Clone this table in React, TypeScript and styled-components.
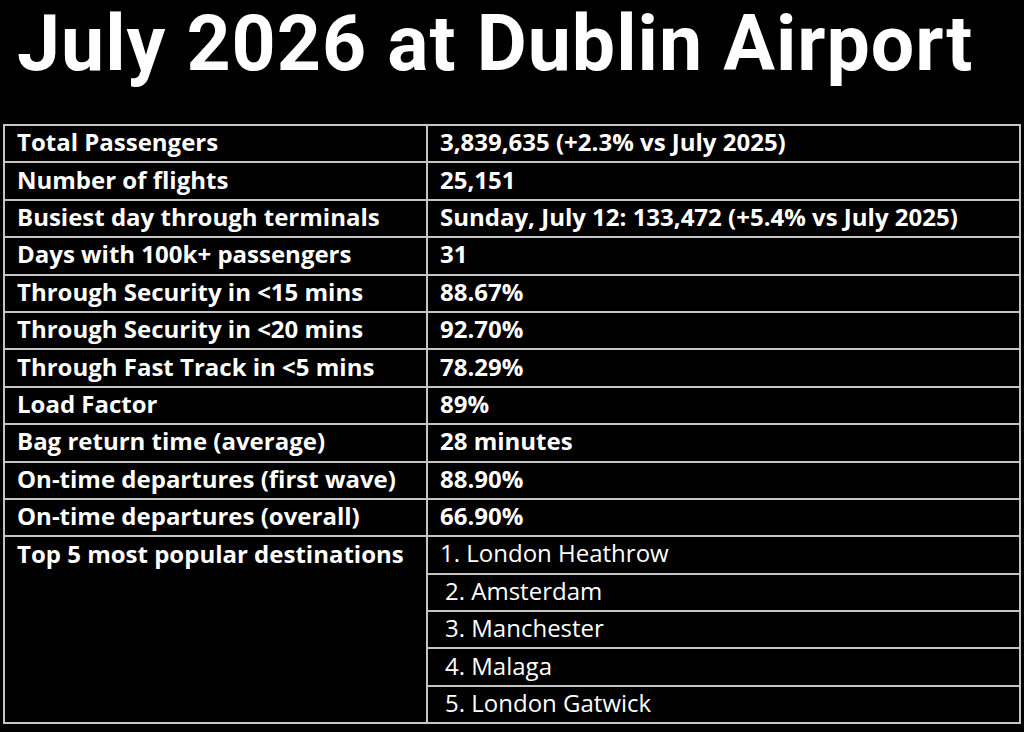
import React from 'react';
import styled, { createGlobalStyle } from 'styled-components';

const GlobalStyle = createGlobalStyle`
  html, body {
    margin: 0;
    padding: 0;
    background: #000;
  }
  body {
    font-family: "Open Sans", "Noto Sans", sans-serif;
    color: #fff;
  }
`;

const stats: [string, string][] = [
  ['Total Passengers', '3,839,635 (+2.3% vs July 2025)'],
  ['Number of flights', '25,151'],
  ['Busiest day through terminals', 'Sunday, July 12: 133,472 (+5.4% vs July 2025)'],
  ['Days with 100k+ passengers', '31'],
  ['Through Security in <15 mins', '88.67%'],
  ['Through Security in <20 mins', '92.70%'],
  ['Through Fast Track in <5 mins', '78.29%'],
  ['Load Factor', '89%'],
  ['Bag return time (average)', '28 minutes'],
  ['On-time departures (first wave)', '88.90%'],
  ['On-time departures (overall)', '66.90%'],
];

const destinations = ['London Heathrow', 'Amsterdam', 'Manchester', 'Malaga', 'London Gatwick'];

const App = () => {
  return (
    <>
      <GlobalStyle />
      <Page>
        <Title>July 2026 at Dublin Airport</Title>
        <StatsTable>
          <colgroup>
            <col style={{ width: 423 }} />
            <col />
          </colgroup>
          <tbody>
            {stats.map(([label, value]) => (
              <tr key={label}>
                <Cell>{label}</Cell>
                <Cell>{value}</Cell>
              </tr>
            ))}
            {destinations.map((name, i) => (
              <tr key={name}>
                {i === 0 && (
                  <Cell rowSpan={destinations.length} $top>
                    Top 5 most popular destinations
                  </Cell>
                )}
                <Cell $light $indent={i > 0}>
                  {i + 1}. {name}
                </Cell>
              </tr>
            ))}
          </tbody>
        </StatsTable>
      </Page>
    </>
  );
};

export default App;

const Page = styled.div`
  width: 1024px;
  height: 732px;
  padding: 0 3px;
  box-sizing: border-box;
  overflow: hidden;
`;

const Title = styled.h1`
  margin: 0;
  padding: 0 0 0 14px;
  height: 124px;
  font-family: Roboto, "Open Sans", sans-serif;
  font-size: 77px;
  font-weight: 700;
  line-height: 89px;
  letter-spacing: 1px;
  white-space: nowrap;
`;

const StatsTable = styled.table`
  width: 1018px;
  border-collapse: collapse;
  table-layout: fixed;
`;

const Cell = styled.td<{ $top?: boolean; $light?: boolean; $indent?: boolean }>`
  height: 32.4px;
  padding: ${(p) => (p.$top ? 3 : 0)}px 0 ${(p) => (p.$top ? 0 : 3)}px
    ${(p) => (p.$indent ? 17 : 12)}px;
  border: 2px solid #c4c4c4;
  font-size: 24px;
  font-weight: ${(p) => (p.$light ? 400 : 700)};
  line-height: 28px;
  vertical-align: ${(p) => (p.$top ? 'top' : 'middle')};
  white-space: nowrap;
`;
